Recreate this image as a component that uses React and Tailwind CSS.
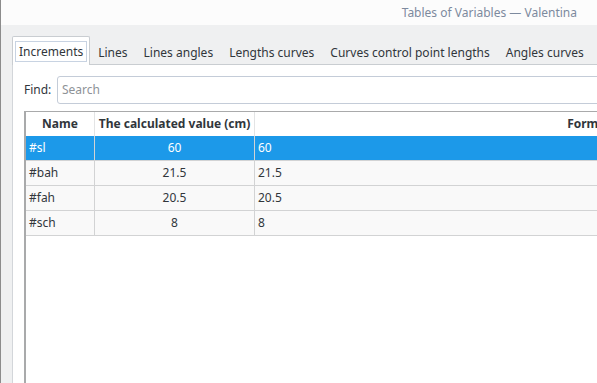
import React from 'react';

const tabs = ['Increments', 'Lines', 'Lines angles', 'Lengths curves', 'Curves control point lengths', 'Angles curves'];

const rows = [
    { name: '#sl', value: '60', formula: '60' },
    { name: '#bah', value: '21.5', formula: '21.5' },
    { name: '#fah', value: '20.5', formula: '20.5' },
    { name: '#sch', value: '8', formula: '8' },
];

const App = () => {
    return (
        <div className="w-[597px] h-[383px] overflow-hidden bg-[#eff0f1] border-l border-[#8c8c8c] flex flex-col font-['Noto_Sans',sans-serif] text-[12px] text-[#31363b]">
            {/* title bar */}
            <div className="h-[25px] shrink-0 bg-[#fcfcfc] flex items-center justify-end pr-[20px]">
                <span className="text-[#7d8a9e] text-[12px] leading-none">Tables of Variables — Valentina</span>
            </div>

            <div className="flex-1 flex flex-col pl-[11px] pt-[11px] min-h-0">
                {/* tab bar */}
                <div className="flex h-[29px] shrink-0 whitespace-nowrap">
                    {tabs.map((tab, i) =>
                        i === 0 ? (
                            <div key={tab} className="shrink-0 bg-white border border-b-0 border-[#c9cdd1] rounded-t-[2px] px-[2px] pt-[4px]">
                                <div className="border border-[#c8d3e2] h-[21px] px-[3px] flex items-center">{tab}</div>
                            </div>
                        ) : (
                            <div key={tab} className="shrink-0 px-[8px] pt-[6px] flex items-center h-full border-b border-[#c9cdd1]">
                                {tab}
                            </div>
                        )
                    )}
                    <div className="flex-1 border-b border-[#c9cdd1]" />
                </div>

                {/* tab pane */}
                <div className="flex-1 bg-white border-l border-[#d3d6da] overflow-hidden pl-[11px] pt-[11px]">
                    <div className="flex items-center h-[28px] whitespace-nowrap">
                        <span className="w-[33px] shrink-0">Find:</span>
                        <div className="w-[560px] shrink-0 h-[28px] border border-[#c4ccd8] rounded-[3px] flex items-center pl-[4px] text-[#8e9297]">
                            Search
                        </div>
                    </div>

                    {/* table */}
                    <div className="mt-[7px] w-[920px] h-[300px] border-l-2 border-t border-[#a9aaab] whitespace-nowrap">
                        <div className="flex h-[24px] font-bold text-[#31363b] bg-white">
                            <div className="w-[69px] flex items-center justify-center border-r border-[#e3e4e5]">Name</div>
                            <div className="w-[160px] flex items-center justify-center border-r border-[#e3e4e5]">The calculated value (cm)</div>
                            <div className="w-[674px] flex items-center justify-center">Formula</div>
                        </div>
                        {rows.map((row, i) => {
                            const selected = i === 0;
                            return (
                                <div
                                    key={row.name}
                                    className={
                                        selected
                                            ? 'flex h-[25px] bg-[#1c99e9] text-white border-b border-[#d2d3d4]'
                                            : 'flex h-[25px] bg-[#f9f9f9] border-b border-[#d2d3d4]'
                                    }
                                >
                                    <div className="w-[69px] flex items-center pl-[3px] border-r border-[#d2d3d4]">{row.name}</div>
                                    <div className="w-[160px] flex items-center justify-center border-r border-[#d2d3d4]">{row.value}</div>
                                    <div className="w-[674px] flex items-center pl-[3px]">{row.formula}</div>
                                </div>
                            );
                        })}
                    </div>
                </div>
            </div>
        </div>
    );
};

export default App;
